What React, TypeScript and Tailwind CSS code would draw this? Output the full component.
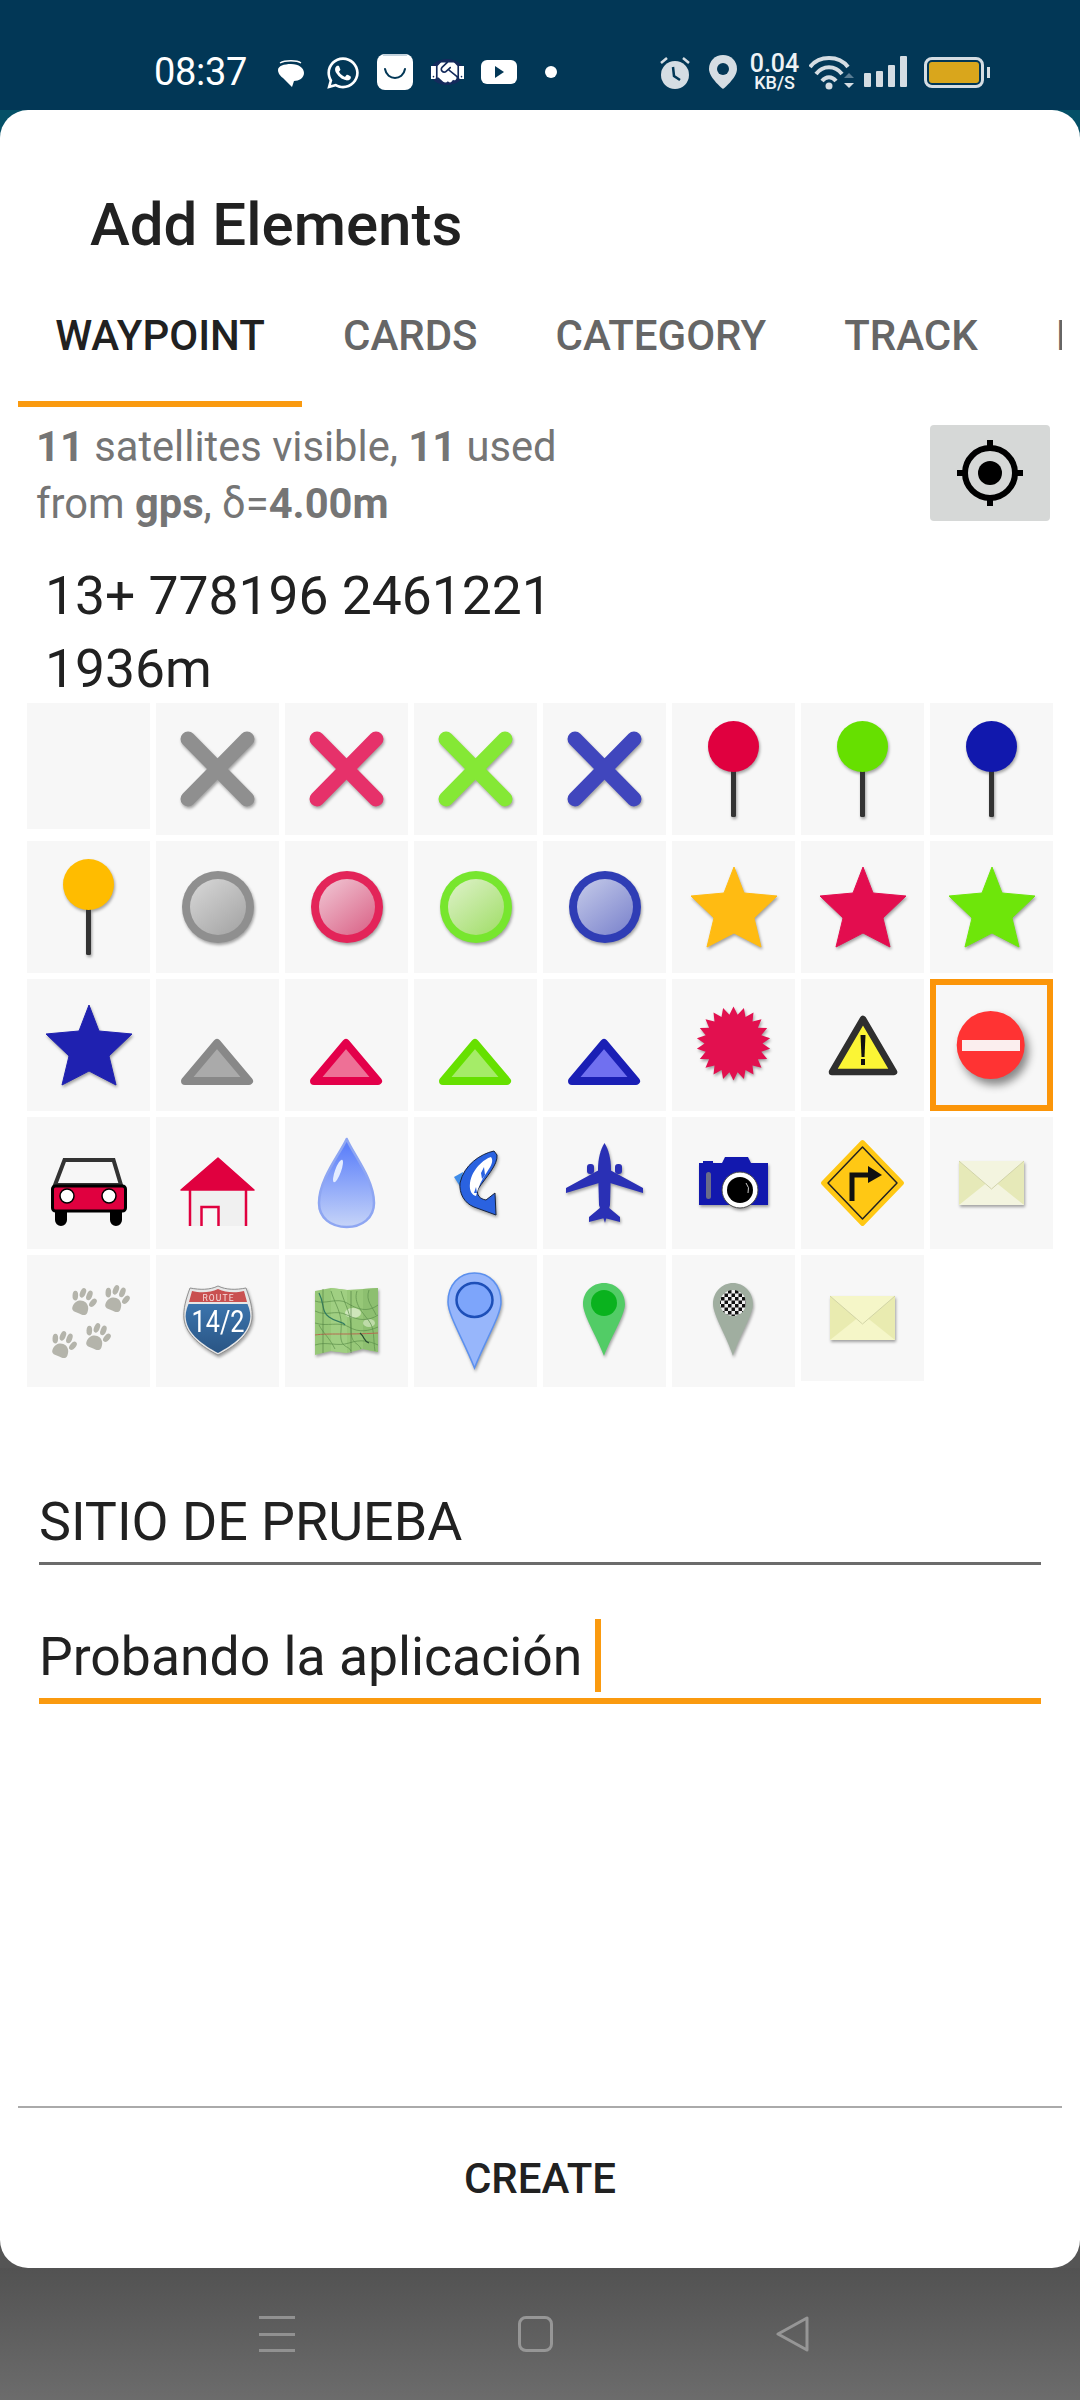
import React from "react";
import { FaWhatsapp, FaHandshake } from "react-icons/fa";

const Svg = ({ children, shadow = true, big = false }: { children: React.ReactNode; shadow?: boolean; big?: boolean }) => (
  <svg
    viewBox="0 0 123 132"
    width={123}
    height={132}
    className={
      big
        ? "block drop-shadow-[4px_6px_4px_rgba(0,0,0,0.45)]"
        : shadow
          ? "block drop-shadow-[1.5px_2.5px_1.5px_rgba(0,0,0,0.35)]"
          : "block"
    }
  >
    {children}
  </svg>
);

const Cross = ({ c }: { c: string }) => (
  <Svg>
    <path d="M32 36 L91 96 M91 36 L32 96" stroke={c} strokeWidth="15" strokeLinecap="round" fill="none" />
  </Svg>
);
const Pin = ({ c }: { c: string }) => (
  <Svg>
    <rect x="59" y="66" width="5" height="48" rx="1.5" fill="#333" />
    <circle cx="61.5" cy="43.5" r="25.5" fill={c} />
  </Svg>
);
const Dot = ({ id, ring, a, b }: { id: string; ring: string; a: string; b: string }) => (
  <Svg>
    <defs>
      <linearGradient id={id} x1="0.1" y1="0" x2="0.9" y2="1">
        <stop offset="0" stopColor={a} />
        <stop offset="1" stopColor={b} />
      </linearGradient>
    </defs>
    <circle cx="62" cy="66" r="36" fill={ring} />
    <circle cx="62" cy="66" r="28" fill={`url(#${id})`} />
  </Svg>
);
const Star = ({ c }: { c: string }) => (
  <Svg>
    <path d="M62 26 L72 52 L105 55 L82 77 L89 106 L62 92 L35 106 L42 77 L19 55 L52 52 Z" fill={c} stroke={c} strokeLinejoin="round" strokeWidth="1" />
  </Svg>
);
const Tri = ({ s, f }: { s: string; f: string }) => (
  <Svg shadow={false}>
    <path d="M61 64 L93 102 L29 102 Z" fill={f} stroke={s} strokeWidth="8" strokeLinejoin="round" />
  </Svg>
);
const burst = Array.from({ length: 44 }, (_, i) => {
  const r = i % 2 === 0 ? 37 : 29;
  const a = (i * Math.PI) / 22 - Math.PI / 2;
  return `${(61.5 + r * Math.cos(a)).toFixed(1)},${(64.5 + r * Math.sin(a)).toFixed(1)}`;
}).join(" ");

const Envelope = ({ y, a, b, c }: { y: number; a: string; b: string; c: string }) => (
  <Svg>
    <g transform={`translate(0 ${y})`}>
      <rect x="29" y="44" width="65" height="44" fill={a} />
      <path d="M29 44 L61.5 72 L29 88 Z M94 44 L61.5 72 L94 88 Z" fill={b} />
      <path d="M29 88 L61.5 62 L94 88 Z" fill={c} />
      <path d="M29 44 L61.5 72 L94 44" fill={c} stroke="#c9cc9e" strokeWidth="0.8" />
    </g>
  </Svg>
);

const Paw = ({ x, y }: { x: number; y: number }) => (
  <g transform={`translate(${x} ${y}) rotate(22)`} fill="#b4b4ab">
    <path d="M-8 8 C-8 2 -4 -1 0 -1 C4 -1 8 2 8 8 C8 13 3 12 0 12 C-3 12 -8 13 -8 8 Z" />
    <ellipse cx="-9.5" cy="-3" rx="2.8" ry="4.8" transform="rotate(-20 -9.5 -3)" />
    <ellipse cx="-3.5" cy="-8.5" rx="2.8" ry="5" />
    <ellipse cx="3.5" cy="-8.5" rx="2.8" ry="5" />
    <ellipse cx="9.5" cy="-3" rx="2.8" ry="4.8" transform="rotate(20 9.5 -3)" />
  </g>
);

const icons: React.ReactNode[] = [
  null,
  <Cross c="#8f8f8f" />,
  <Cross c="#e6316a" />,
  <Cross c="#85e835" />,
  <Cross c="#4046bd" />,
  <Pin c="#e0003f" />,
  <Pin c="#66e000" />,
  <Pin c="#1118ad" />,
  <Pin c="#ffbc00" />,
  <Dot id="d1" ring="#8f8f8f" a="#d6d6d6" b="#a4a4a4" />,
  <Dot id="d2" ring="#e32459" a="#f0c4d2" b="#da6488" />,
  <Dot id="d3" ring="#77e62e" a="#dcf1c6" b="#a2de6a" />,
  <Dot id="d4" ring="#2f3db5" a="#c2c8e8" b="#7c84cd" />,
  <Star c="#ffbb12" />,
  <Star c="#e30d4f" />,
  <Star c="#6ee60a" />,
  <Star c="#1f21b0" />,
  <Tri s="#888888" f="#aaaaaa" />,
  <Tri s="#e3004a" f="#ee7096" />,
  <Tri s="#66e000" f="#a5ec68" />,
  <Tri s="#1a1fb5" f="#7070f0" />,
  <Svg><polygon points={burst} fill="#e2104f" /></Svg>,
  <Svg shadow={false}>
    <path d="M62 40 L93 93 L31 93 Z" fill="#fbf535" stroke="#2f2f2f" strokeWidth="6.5" strokeLinejoin="round" />
    <path d="M59.5 56 L64.5 56 L63.5 78 L60.5 78 Z" fill="#111" />
    <rect x="60" y="80" width="4" height="6" fill="#111" />
  </Svg>,
  <Svg big>
    <circle cx="60.7" cy="66" r="34" fill="#ff3333" />
    <rect x="32" y="61" width="58" height="11" fill="#fbeeee" />
  </Svg>,
  <Svg shadow={false}>
    <path d="M37.5 43 L86.5 43 L94 68 L28 68 Z" fill="none" stroke="#333" strokeWidth="4" />
    <path d="M28 92 H40 V103 A6 6 0 0 1 28 103 Z M83 92 H95 V103 A6 6 0 0 1 83 103 Z" fill="#000" />
    <rect x="25.5" y="69" width="73" height="25" rx="3" fill="#e0003f" stroke="#000" strokeWidth="3" />
    <circle cx="40" cy="79" r="7" fill="#fff" stroke="#000" strokeWidth="1.5" />
    <circle cx="82" cy="79" r="7" fill="#fff" stroke="#000" strokeWidth="1.5" />
  </Svg>,
  <Svg shadow={false}>
    <rect x="33" y="72" width="58" height="37" fill="#f0f0f0" />
    <path d="M34 72 L34 109 M90 72 L90 109" stroke="#e0003f" strokeWidth="2.5" />
    <path d="M45.5 109 L45.5 90 L62.5 90 L62.5 109" fill="#f7f7f7" stroke="#e0003f" strokeWidth="2.5" />
    <path d="M62 41 L98 73 L25 73 Z" fill="#e0003f" stroke="#e0003f" strokeLinejoin="round" strokeWidth="1.5" />
  </Svg>,
  <Svg shadow={false}>
    <defs>
      <linearGradient id="drop" x1="0" y1="0" x2="0" y2="1">
        <stop offset="0.1" stopColor="#5f82fa" />
        <stop offset="1" stopColor="#c6d4f8" />
      </linearGradient>
    </defs>
    <path d="M61.7 22 C68 37 89 62 89 86 C89 101 77 110 61.7 110 C46 110 34 101 34 86 C34 62 55 37 61.7 22 Z" fill="url(#drop)" stroke="#8ea6f2" strokeWidth="2.5" strokeLinejoin="round" />
    <ellipse cx="53" cy="54" rx="3" ry="12" transform="rotate(20 53 54)" fill="#e4ecff" />
  </Svg>,
  <Svg>
    <path d="M40 60 L49 55 L47 71 Z" fill="#3f8ce8" />
    <path d="M80 34 C66 37 50 48 46 66 C45 76 50 86 60 90 L82 98 L81 76 L72 83 C66 82 62 78 64 72 C72 60 84 48 83 38 Z" fill="#2a62e0" stroke="#16233f" strokeWidth="1" strokeLinejoin="round" />
    <path d="M77 40 C70 42 58 52 56 66 C55 74 58 78 62 79 C64 70 68 62 73 55 C77 49 80 44 77 40 Z" fill="#fff" />
    <path d="M67 56 L70 50 L71 58 L68 62 Z M60 76 L62 70 L63 76 Z" fill="#2a62e0" />
  </Svg>,
  <Svg>
    <g fill="#2a30b5">
      <path d="M61.5 26 C65.5 32 68 42 68 52 L67 88 L62 106 L56 88 L55 52 C55 42 57.5 32 61.5 26 Z" />
      <path d="M56 53 L23 71 L23 76 L56 66 Z M67 53 L100 71 L100 76 L67 66 Z" />
      <path d="M58 90 L46 100 L46 105 L61.5 101 L77 105 L77 100 L65 90 Z" />
      <rect x="44" y="47" width="7" height="10" rx="3" />
      <rect x="72" y="47" width="7" height="10" rx="3" />
    </g>
  </Svg>,
  <Svg>
    <path d="M53 40 L76 40 L79 46 L96 46 L96 88 L27 88 L27 46 L31 46 L31 44 L41 44 L41 46 L50 46 Z" fill="#1218ae" strokeLinejoin="round" />
    <rect x="34" y="55" width="5" height="27" rx="2.5" fill="#6a6c8a" />
    <circle cx="68" cy="73" r="18" fill="#fff" stroke="#444" strokeWidth="1" />
    <circle cx="68" cy="73" r="13" fill="#000" />
    <path d="M74 66 A 10 10 0 0 1 76 76" fill="none" stroke="#ccc" strokeWidth="1" />
  </Svg>,
  <Svg shadow={false}>
    <path d="M61.5 25 L101 66 L61.5 107 L22 66 Z" fill="#ffc814" stroke="#ffc814" strokeWidth="4" strokeLinejoin="round" />
    <path d="M61.5 30 L96 66 L61.5 102 L27 66 Z" fill="none" stroke="#222" strokeWidth="1.5" strokeLinejoin="round" />
    <path d="M51 84 L51 58 L68 58" fill="none" stroke="#111" strokeWidth="5" />
    <path d="M67 49 L81 58 L67 66 Z" fill="#111" />
  </Svg>,
  <Envelope y={0} a="#f4f5e0" b="#e6e9b8" c="#f3f4df" />,
  <Svg shadow={false}>
    <Paw x={56} y={47} />
    <Paw x={89} y={44} />
    <Paw x={36} y={90} />
    <Paw x={70} y={82} />
  </Svg>,
  <Svg>
    <defs>
      <linearGradient id="sh" x1="0" y1="0" x2="0" y2="1">
        <stop offset="0" stopColor="#3b74ad" />
        <stop offset="1" stopColor="#2a5584" />
      </linearGradient>
    </defs>
    <path d="M34 33 C44 35 54 35 62 31 C70 35 80 35 90 33 C94 44 97 54 96 64 C94 80 78 92 62 100 C46 92 30 80 28 64 C27 54 30 44 34 33 Z" fill="#e6e6e6" stroke="#8f8f8f" strokeWidth="1" />
    <path d="M36 36 C44 38 54 38 62 34 C70 38 80 38 88 36 L91 47 L33 47 Z" fill="#c95050" />
    <path d="M32.5 49 L91.5 49 C94 55 95 60 94 65 C92 79 77 90 62 98 C47 90 32 79 30 65 C29 60 30 55 32.5 49 Z" fill="url(#sh)" />
    <text x="62" y="46" textAnchor="middle" fontSize="8.5" fontFamily="Roboto, sans-serif" fill="#f6dede" textLength="31" lengthAdjust="spacing">ROUTE</text>
    <text x="62" y="77" textAnchor="middle" fontSize="31" fontFamily="Roboto, sans-serif" fontWeight="400" fill="#fff" textLength="53" lengthAdjust="spacingAndGlyphs">14/2</text>
  </Svg>,
  <Svg>
    <path d="M30 36 L46 33 L62 35 L78 34 L93 33 L93 97 L78 94 L62 98 L46 96 L30 100 Z" fill="#97c878" />
    <path d="M46 33 L46 96 L62 98 L62 35 Z" fill="#a0cf82" />
    <path d="M78 34 L78 94 L93 97 L93 33 Z" fill="#8dbf70" />
    <ellipse cx="68" cy="58" rx="8" ry="5" fill="#cfe6bb" />
    <ellipse cx="84" cy="68" rx="6" ry="4" fill="#bedba8" />
    <g fill="none" stroke="#5c8f4a" strokeWidth="0.7">
      <path d="M30 46 C40 50 52 42 62 48 S82 58 93 50" />
      <path d="M30 56 C42 62 50 54 62 60 S84 66 93 60" />
      <path d="M30 68 C42 72 54 66 64 72 S84 76 93 72" />
      <path d="M30 90 C42 86 52 92 64 88 S84 86 93 90" />
      <path d="M46 36 C50 50 58 58 56 76 S64 90 66 96" />
      <path d="M56 36 C60 50 66 58 66 74 S72 86 76 94" />
      <path d="M72 36 C68 48 78 58 84 66 S88 84 90 96" />
      <path d="M84 35 C80 46 88 52 91 60" />
      <path d="M34 70 C38 78 44 82 50 94" />
    </g>
    <path d="M30 80 C44 78 60 80 93 78" fill="none" stroke="#b66a50" strokeWidth="1" />
    <path d="M34 38 C40 50 36 56 44 62 S58 66 60 70" fill="none" stroke="#2f7a60" strokeWidth="1.2" />
    <path d="M75 78 C80 82 78 86 84 88" fill="none" stroke="#234a30" strokeWidth="1.2" />
    <path d="M38 34 L38 98 M66 36 L66 98" fill="none" stroke="#4b7a3c" strokeWidth="0.6" />
  </Svg>,
  <Svg>
    <path d="M60.5 18 C76 18 87 30 87 47 C87 60 72 84 60.5 113 C49 84 34 60 34 47 C34 30 45 18 60.5 18 Z" fill="#97b6fb" stroke="#5c90ee" strokeWidth="1.5" />
    <ellipse cx="60.5" cy="45" rx="18" ry="17" fill="#7da5fb" stroke="#1d4fb8" strokeWidth="2.5" />
  </Svg>,
  <Svg>
    <path d="M61 28 C73 28 82 37 82 49 C82 60 69 80 61 101 C53 80 40 60 40 49 C40 37 49 28 61 28 Z" fill="#52cc66" />
    <circle cx="61" cy="48" r="13" fill="#0ab21e" />
  </Svg>,
  <Svg>
    <defs>
      <pattern id="chk" width="7" height="7" patternUnits="userSpaceOnUse">
        <rect width="7" height="7" fill="#eee" />
        <rect width="3.5" height="3.5" fill="#111" />
        <rect x="3.5" y="3.5" width="3.5" height="3.5" fill="#111" />
      </pattern>
    </defs>
    <path d="M61 28 C72 28 81 37 81 49 C81 60 68 80 61 101 C54 80 41 60 41 49 C41 37 50 28 61 28 Z" fill="#a0aea0" />
    <circle cx="61" cy="48" r="13" fill="url(#chk)" />
  </Svg>,
  <Envelope y={-3} a="#f5f6c8" b="#e9ebb0" c="#f5f6c8" />,
];

const App = () => (
  <div className="flex h-[2400px] w-[1080px] flex-col overflow-hidden font-['Roboto',sans-serif]">
    {/* status bar */}
    <div className="flex h-[110px] items-start bg-[#023756] pt-[54px] text-white">
      <span className="ml-[154px] w-[94px] text-[38px] leading-[36px] tracking-[-0.3px]">08:37</span>
      <svg viewBox="0 0 28 28" className="ml-[29px] h-[28px] w-[28px] translate-y-[6px]">
        <path d="M3 3 C8 0 20 0 24 3" fill="none" stroke="#fff" strokeWidth="1.3" />
        <path d="M14 4 C22 4 27 8 27 13 C27 18 22 21 17 21 L15 27 L6 18 C2 15 1 12 1 10 C1 6 7 4 14 4 Z" fill="#fff" />
      </svg>
      <FaWhatsapp className="ml-[20px] translate-y-[1px] text-[36px]" />
      <div className="ml-[16px] flex h-[36px] w-[36px] items-center justify-center rounded-[8px] bg-white">
        <svg viewBox="0 0 36 36" className="h-[36px] w-[36px]">
          <path d="M8 15 C10 27 26 27 28 15" fill="none" stroke="#023756" strokeWidth="2" strokeLinecap="round" />
          <path d="M6 1 L30 1" stroke="#c4d2dc" strokeWidth="2" />
        </svg>
      </div>
      <div className="ml-[17px] flex h-[26px] w-[34px] translate-y-[5px] items-center justify-center rounded-[50%] bg-[#142a5c]">
        <FaHandshake className="text-[33px] text-white" />
      </div>
      <div className="ml-[17px] flex h-[24px] w-[36px] translate-y-[6px] items-center justify-center rounded-[6px] bg-white">
        <div className="h-0 w-0 border-y-[6px] border-l-[9px] border-y-transparent border-l-[#023756]" />
      </div>
      <div className="ml-[28px] h-[12px] w-[12px] translate-y-[12px] rounded-full bg-white" />

      <svg viewBox="0 0 32 34" className="ml-[102px] h-[34px] w-[32px] translate-y-[1px]">
        <circle cx="16" cy="20" r="14" fill="#d5dde3" />
        <path d="M2 8 L8 3 M24 3 L30 8" stroke="#d5dde3" strokeWidth="2.5" />
        <path d="M14 12 L15 21 L21 25" fill="none" stroke="#023756" strokeWidth="2.5" />
      </svg>
      <svg viewBox="0 0 28 34" className="ml-[18px] h-[34px] w-[28px] translate-y-[1px]">
        <path d="M14 0 C6 0 0 6 0 14 C0 23 14 34 14 34 C14 34 28 23 28 14 C28 6 22 0 14 0 Z" fill="#d5dde3" />
        <circle cx="14" cy="14" r="6" fill="#023756" />
      </svg>
      <div className="ml-[12px] flex w-[51px] flex-col items-center font-medium text-[#eef2f5]">
        <span className="text-[25px] leading-[20px]">0.04</span>
        <span className="text-[18px] leading-[17px]">KB/S</span>
      </div>
      <svg viewBox="0 0 46 36" className="ml-[9px] h-[36px] w-[46px]">
        <g fill="none" stroke="#d5dde3" strokeWidth="4">
          <path d="M1 13 C10 1 30 1 39 13" />
          <path d="M7 20 C14 11 26 11 33 20" />
          <path d="M13 27 C17 22 23 22 27 27" />
        </g>
        <circle cx="20" cy="32" r="3.5" fill="#d5dde3" />
        <path d="M35 24 L40 19 L45 24 Z" fill="#5a7d93" />
        <path d="M35 29 L45 29 L40 34 Z" fill="#d5dde3" />
      </svg>
      <div className="ml-[9px] flex h-[31px] w-[43px] translate-y-[2px] items-end justify-between">
        <div className="h-[14px] w-[7px] rounded-[1px] bg-[#d5dde3]" />
        <div className="h-[16px] w-[7px] rounded-[1px] bg-[#d5dde3]" />
        <div className="h-[22px] w-[7px] rounded-[1px] bg-[#d5dde3]" />
        <div className="h-[31px] w-[7px] rounded-[1px] bg-[#d5dde3]" />
      </div>
      <div className="ml-[17px] flex h-[31px] w-[60px] translate-y-[3px] items-center justify-center rounded-[8px] border-[3px] border-[#d5dde3]">
        <div className="h-[21px] w-[50px] rounded-[3px] bg-[#d9a61c]" />
      </div>
      <div className="ml-[3px] h-[11px] w-[3px] translate-y-[13px] bg-[#d5dde3]" />
    </div>

    {/* sheet */}
    <div className="h-[2158px] bg-[linear-gradient(#045067_50%,#555555_50%)]">
      <div className="flex h-full flex-col rounded-[28px] bg-white">
        <h1 className="ml-[90px] mt-[79px] text-[60px] font-medium leading-[72px] text-[#212121]">Add Elements</h1>

        <div className="mx-[18px] mt-[51px] flex h-[95px] overflow-hidden text-[42px] font-medium leading-[48px] text-[#666666]">
          <div className="h-[95px] w-[284px] shrink-0 border-b-[6px] border-[#fa9a0f] text-center text-[#212121]">WAYPOINT</div>
          <div className="ml-[1px] shrink-0 pl-[40px] pr-[39px]">CARDS</div>
          <div className="shrink-0 pl-[39px] pr-[39px]">CATEGORY</div>
          <div className="shrink-0 pl-[39px] pr-[39px]">TRACK</div>
          <div className="shrink-0 pl-[39px]">I</div>
        </div>

        <div className="ml-[36px] mr-[30px] mt-[11px] flex h-[114px] justify-between">
          <p className="text-[41.7px] leading-[57px] text-[#757575]">
            <b className="font-bold">11</b> satellites visible, <b className="font-bold">11</b> used
            <br />
            from <b className="font-bold">gps</b>, δ=<b className="font-bold">4.00m</b>
          </p>
          <div className="mt-[7px] flex h-[96px] w-[120px] items-center justify-center rounded-[4px] bg-[#d6d8d7]">
            <svg viewBox="0 0 66 66" className="h-[66px] w-[66px]">
              <circle cx="33" cy="33" r="25" fill="none" stroke="#000" strokeWidth="6" />
              <circle cx="33" cy="33" r="12" fill="#000" />
              <path d="M33 0 V10 M33 56 V66 M0 33 H10 M56 33 H66" stroke="#000" strokeWidth="6" />
            </svg>
          </div>
        </div>

        <p className="ml-[45px] mt-[27px] text-[53.4px] leading-[73px] text-[#212121]">
          13+ 778196 2461221
          <br />
          1936m
        </p>

        <div className="ml-[27px] mt-[-2px] grid grid-cols-[repeat(8,123px)] auto-rows-[132px] items-start gap-[6px]">
          {icons.map((icon, i) => (
            <div
              key={i}
              className={`relative bg-[#f7f7f7] ${i === 0 || i === 38 ? "h-[126px]" : "h-[132px]"} w-[123px] overflow-hidden`}
            >
              {icon}
              {i === 23 && <div className="absolute inset-0 border-[6px] border-[#fb9509]" />}
            </div>
          ))}
        </div>

        <div className="mx-[39px] mt-[99px] h-[79px] border-b-[3px] border-[#6b6b6b] text-[53.8px] leading-[72px] text-[#212121]">
          SITIO DE PRUEBA
        </div>
        <div className="mx-[39px] mt-[51px] flex h-[88px] items-start border-b-[6px] border-[#fa9a0f] text-[53.5px] leading-[72px] text-[#212121]">
          <span className="mt-[5px]">Probando la aplicación</span>
          <span className="ml-[13px] mt-[3px] h-[73px] w-[6px] bg-[#fa9a0f]" />
        </div>

        <div className="mx-[18px] mt-auto h-[162px] border-t-2 border-[#aaaaaa] pt-[47px] text-center text-[42px] font-medium leading-[48px] text-[#212121]">
          CREATE
        </div>
      </div>
    </div>

    {/* nav bar */}
    <div className="flex h-[132px] items-start bg-linear-to-b from-[#525252] to-[#6c6c6c] pt-[48px]">
      <div className="ml-[259px] flex h-[36px] w-[36px] flex-col justify-between">
        <div className="h-[3px] bg-[#919191]" />
        <div className="h-[3px] bg-[#919191]" />
        <div className="h-[3px] bg-[#919191]" />
      </div>
      <div className="ml-[223px] h-[36px] w-[35px] rounded-[8px] border-[3px] border-[#969696]" />
      <svg viewBox="0 0 35 36" className="ml-[222px] h-[36px] w-[35px]">
        <path d="M32 2 L32 34 L3 18 Z" fill="none" stroke="#969696" strokeWidth="3" strokeLinejoin="round" />
      </svg>
    </div>
  </div>
);

export default App;
